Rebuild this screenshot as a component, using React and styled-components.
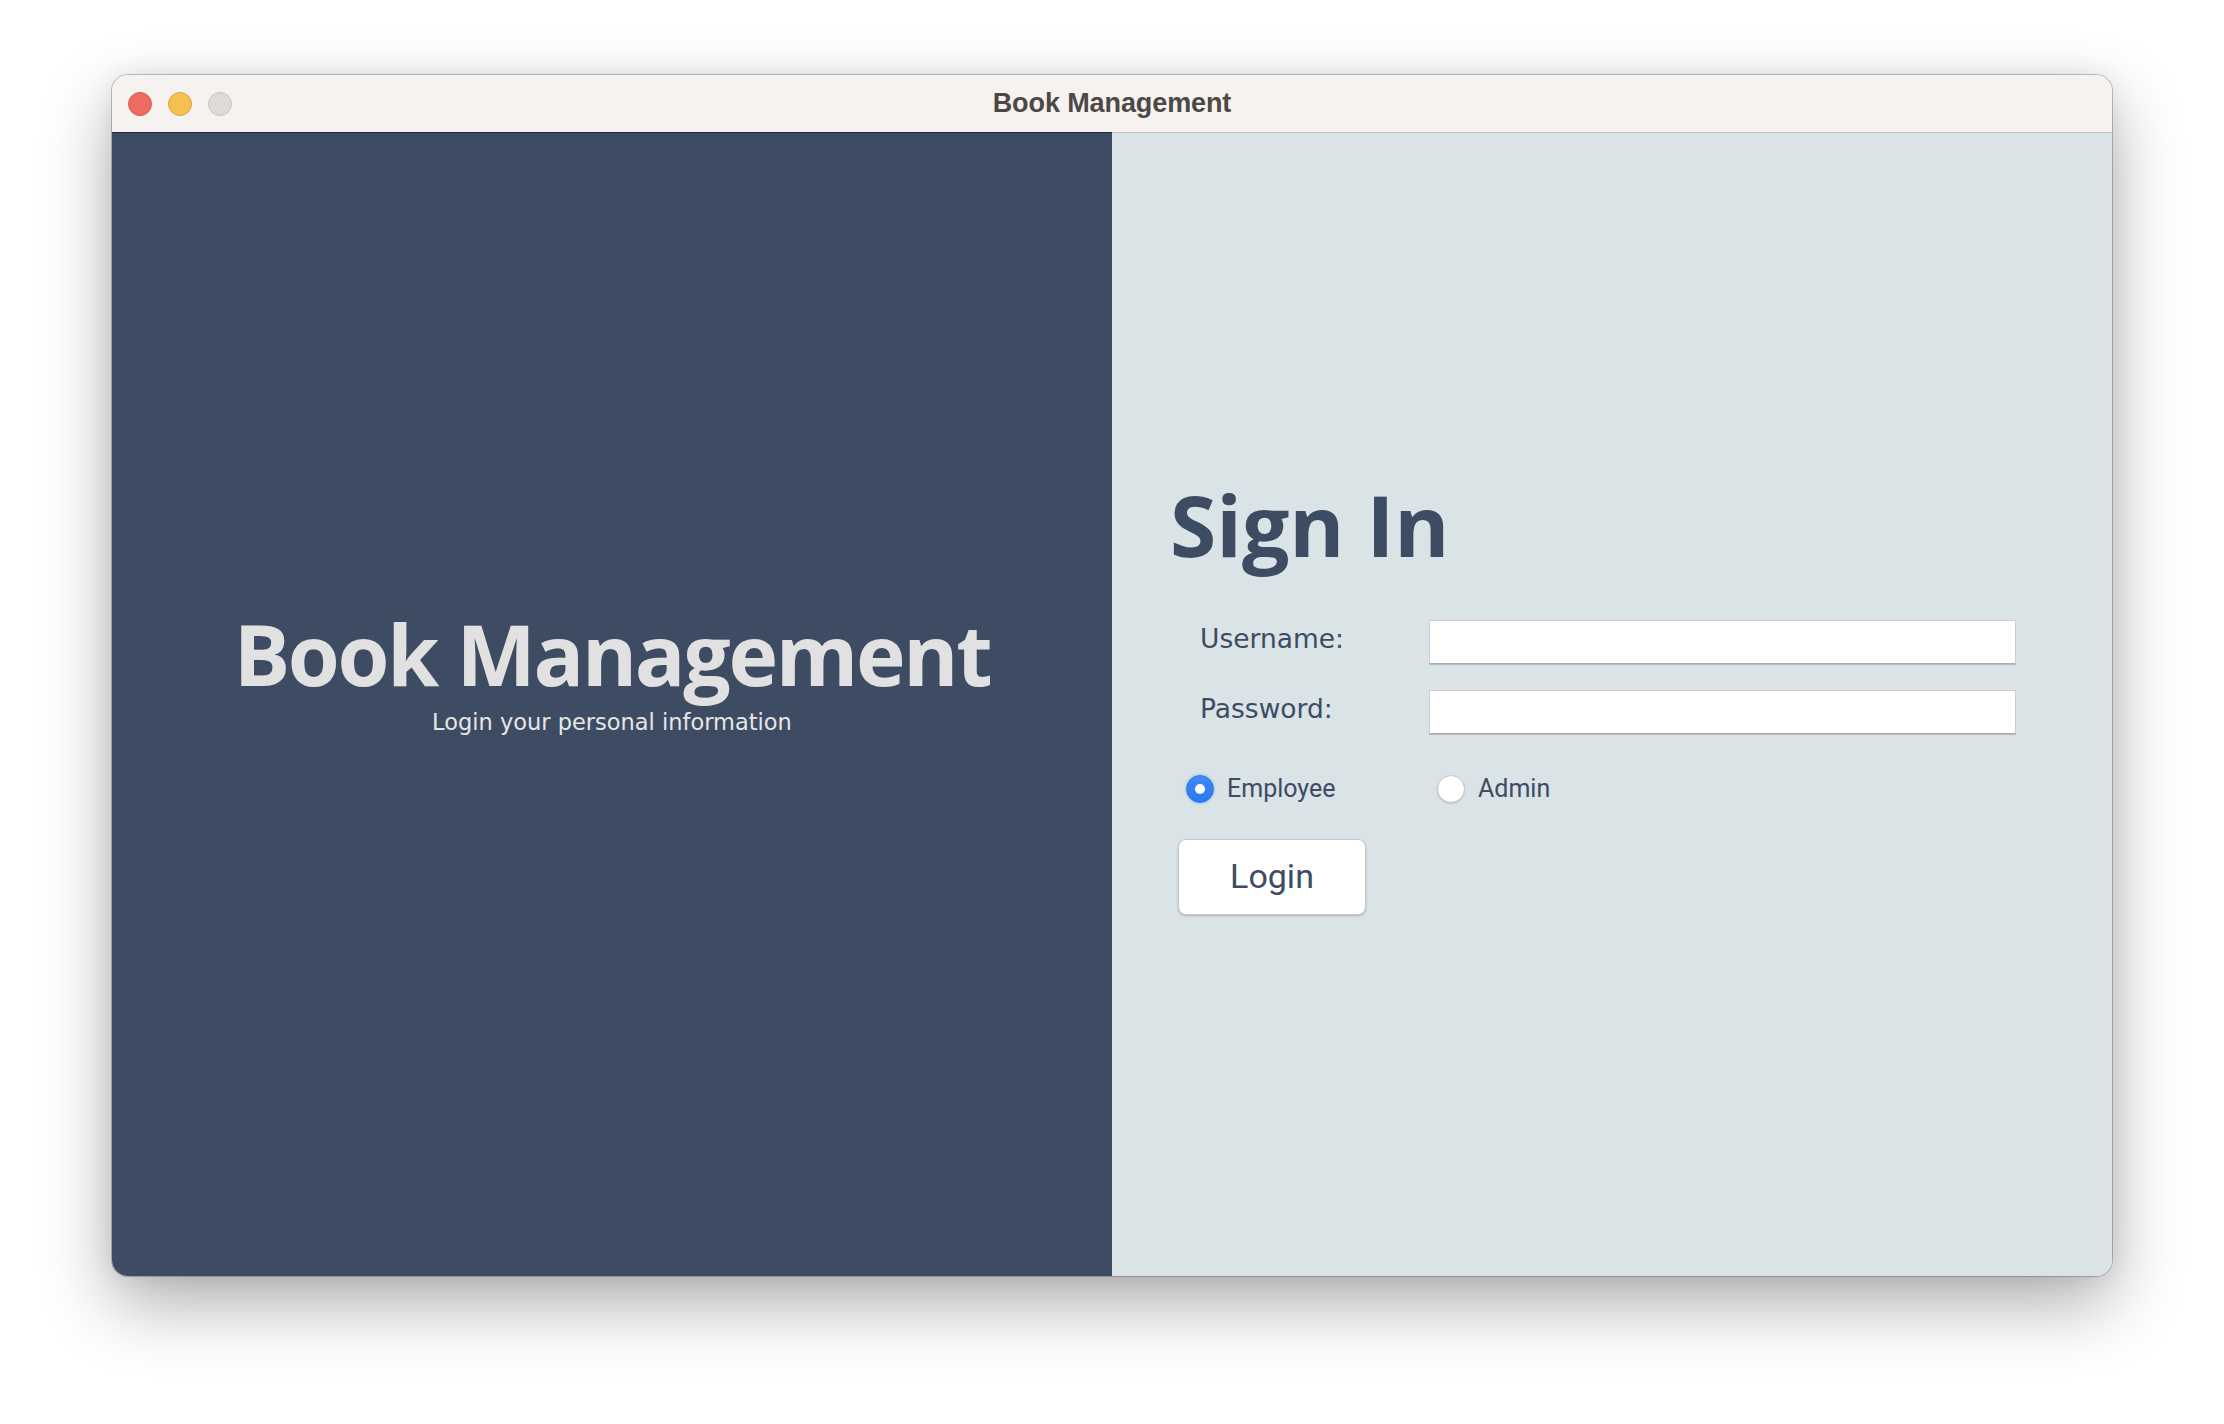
import React, { useState } from "react";
import styled, { createGlobalStyle } from "styled-components";

const GlobalStyle = createGlobalStyle`
  html, body {
    margin: 0;
    padding: 0;
    background: #ffffff;
  }
  * {
    box-sizing: border-box;
  }
`;

const Page = styled.div`
  width: 2224px;
  height: 1424px;
  padding: 75px 112px 0;
  background: #ffffff;
  overflow: hidden;
`;

const Window = styled.div`
  width: 2000px;
  height: 1201px;
  border-radius: 16px;
  overflow: hidden;
  display: flex;
  flex-direction: column;
  box-shadow: 0 0 0 1px rgba(0, 0, 0, 0.22), 0 28px 70px rgba(0, 0, 0, 0.32),
    0 0 24px rgba(0, 0, 0, 0.08);
`;

/* title bar */
const TitleBar = styled.div`
  height: 57px;
  flex: none;
  background: #f6f2ef;
  display: grid;
  grid-template-columns: 1fr auto 1fr;
  align-items: center;
  padding: 0 16px;
`;

const Lights = styled.div`
  display: flex;
  gap: 16px;
  align-items: center;
`;

const Light = styled.span`
  width: 24px;
  height: 24px;
  border-radius: 50%;
  background: ${(p) => p.$fill};
  border: 1px solid ${(p) => p.$edge};
`;

const WindowTitle = styled.div`
  font-family: "Liberation Sans", Arial, sans-serif;
  font-weight: 700;
  font-size: 27px;
  color: #4b4845;
  letter-spacing: -0.1px;
`;

/* content */
const Content = styled.div`
  flex: 1;
  display: grid;
  grid-template-columns: 1fr 1fr;
`;

const LeftPanel = styled.div`
  background: #3d4c63;
  border-top: 1px solid #1d2a3c;
  display: flex;
  flex-direction: column;
  align-items: center;
  padding-top: 479px;
`;

const BrandTitle = styled.h1`
  margin: 0;
  font-family: "Open Sans", "DejaVu Sans", sans-serif;
  font-weight: 700;
  font-size: 84px;
  line-height: 84px;
  letter-spacing: -2.3px;
  color: #e1e1e1;
`;

const BrandSub = styled.p`
  margin: 15px 0 0;
  font-family: "DejaVu Sans", Verdana, sans-serif;
  font-size: 22.5px;
  line-height: 22px;
  color: #e6e6e6;
`;

const RightPanel = styled.div`
  background: #dae3e6;
  border-top: 1px solid #b9bfc2;
  display: flex;
  flex-direction: column;
  align-items: flex-start;
  padding: 350px 0 0 58px;
`;

const Heading = styled.h2`
  margin: 0 0 53px;
  font-family: "Open Sans", "DejaVu Sans", sans-serif;
  font-weight: 700;
  font-size: 84px;
  line-height: 84px;
  color: #3d4c63;
`;

const Form = styled.div`
  display: grid;
  grid-template-columns: 229px 587px;
  row-gap: 26px;
  padding-left: 30px;
`;

const Label = styled.label`
  display: flex;
  align-items: center;
  padding-bottom: 8px;
  font-family: "DejaVu Sans", Verdana, sans-serif;
  font-size: 26.5px;
  color: #3d4c63;
`;

const Field = styled.input`
  height: 44px;
  width: 587px;
  border: 1px solid #c9ced1;
  border-bottom: 1px solid #a9b0b4;
  box-shadow: 0 1px 0 #b5bbbf;
  background: #ffffff;
  outline: none;
  padding: 0 8px;
  font-family: "Roboto", sans-serif;
  font-size: 24px;
  color: #3d4c63;
`;

const RadioRow = styled.div`
  display: flex;
  margin-top: 40px;
  padding-left: 16px;
`;

const RadioItem = styled.label`
  width: 251px;
  display: flex;
  align-items: center;
  gap: 13px;
  font-family: "Roboto", "Liberation Sans", sans-serif;
  font-size: 25px;
  color: #3d4c63;
  cursor: pointer;
`;

const RadioDot = styled.span`
  width: 28px;
  height: 28px;
  flex: none;
  border-radius: 50%;
  display: flex;
  align-items: center;
  justify-content: center;
  background: ${(p) => (p.$on ? "linear-gradient(#3d8cf8, #2b78f2)" : "#ffffff")};
  border: 1px solid ${(p) => (p.$on ? "#2a74e8" : "#c3c6c8")};
  box-shadow: ${(p) =>
    p.$on ? "0 0 3px rgba(43, 120, 242, 0.45)" : "0 1px 1px rgba(0, 0, 0, 0.12)"};

  &::after {
    content: "";
    width: 10px;
    height: 10px;
    border-radius: 50%;
    background: #ffffff;
    display: ${(p) => (p.$on ? "block" : "none")};
  }
`;

const LoginButton = styled.button`
  margin: 36px 0 0 8px;
  width: 188px;
  height: 76px;
  border-radius: 8px;
  border: 1px solid #c8cbce;
  background: #ffffff;
  box-shadow: 0 1px 2px rgba(0, 0, 0, 0.22);
  font-family: "Roboto", "Liberation Sans", sans-serif;
  font-size: 34px;
  color: #3d4c63;
  cursor: pointer;
  padding: 0 0 3px;
`;

const App = () => {
  const [role, setRole] = useState("employee");

  return (
    <Page>
      <GlobalStyle />
      <Window>
        <TitleBar>
          <Lights>
            <Light $fill="#ee6b60" $edge="#d85a50" />
            <Light $fill="#f5c04f" $edge="#d9a53f" />
            <Light $fill="#dedad6" $edge="#c6c2be" />
          </Lights>
          <WindowTitle>Book Management</WindowTitle>
          <span />
        </TitleBar>
        <Content>
          <LeftPanel>
            <BrandTitle>Book Management</BrandTitle>
            <BrandSub>Login your personal information</BrandSub>
          </LeftPanel>
          <RightPanel>
            <Heading>Sign In</Heading>
            <Form>
              <Label htmlFor="username">Username:</Label>
              <Field id="username" type="text" />
              <Label htmlFor="password">Password:</Label>
              <Field id="password" type="password" />
            </Form>
            <RadioRow>
              <RadioItem onClick={() => setRole("employee")}>
                <RadioDot $on={role === "employee"} />
                Employee
              </RadioItem>
              <RadioItem onClick={() => setRole("admin")}>
                <RadioDot $on={role === "admin"} />
                Admin
              </RadioItem>
            </RadioRow>
            <LoginButton>Login</LoginButton>
          </RightPanel>
        </Content>
      </Window>
    </Page>
  );
};

export default App;
